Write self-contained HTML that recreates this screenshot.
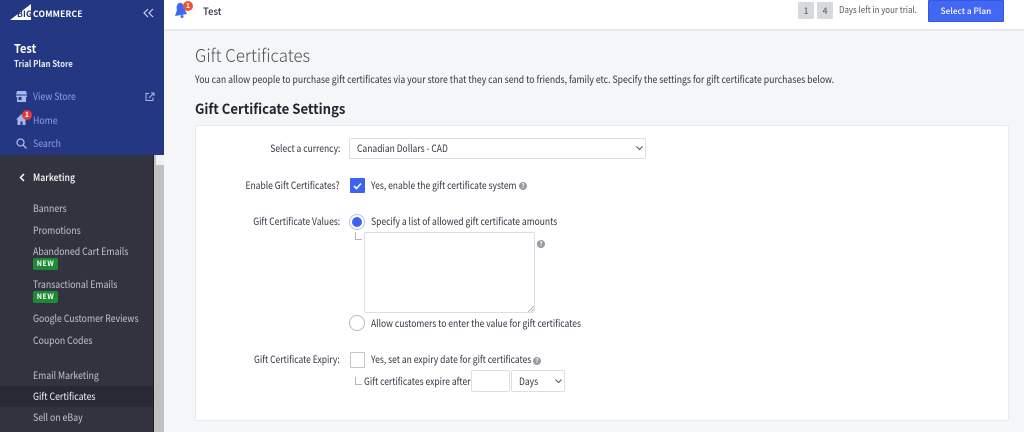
<!DOCTYPE html>
<html><head><meta charset="utf-8"><style>
*{box-sizing:border-box}
html,body{margin:0;padding:0;width:1024px;height:432px;overflow:hidden;background:#f5f6f8;font-family:"Noto Sans CJK JP","Liberation Sans",sans-serif;color:#313440}
.t{position:absolute;white-space:nowrap;line-height:14px;font-size:10px;transform:scaleX(.874);transform-origin:0 0}
.f{transform:scaleX(.851)}
.r{text-align:right;transform-origin:100% 0}
.b{position:absolute}
.n{color:#c3c4cb;left:33px}
.u{color:#8ea0e0;}
.new{position:absolute;left:33px;width:25px;height:12px;background:#1f8a36;border-radius:2px;color:#fff;font-size:7px;font-weight:700;line-height:12px;text-align:center;letter-spacing:.5px}
</style></head><body>
<div class="b" style="left:0;top:0;width:164px;height:155px;background:#243782"></div>
<div class="b" style="left:0;top:155px;width:154px;height:277px;background:#333340"></div>
<div class="b" style="left:154px;top:155px;width:10px;height:277px;background:#c0c0c0"></div>
<div class="b" style="left:156px;top:155px;width:8px;height:10px;background:#f1f1f1"></div>
<div class="b" style="left:153px;top:155px;width:1px;height:277px;background:#1e1e28"></div>
<div class="b" style="left:0;top:386px;width:153px;height:21px;background:#292935"></div>
<svg class="b" style="left:9px;top:3px" width="24" height="18"><path d="M1 17L22 1V17Z" fill="#fff"/></svg>
<div class="t" style="left:17px;top:7px;font-size:8.5px;font-weight:700;color:#243782;letter-spacing:.2px;transform:none">BIG</div>
<div class="t" style="left:33px;top:7px;font-size:8.5px;font-weight:700;color:#fff;letter-spacing:.2px;transform:none">COMMERCE</div>
<svg class="b" style="left:143px;top:8px" width="11" height="10" fill="none" stroke="#c9d2f0" stroke-width="1.2"><path d="M5 1L1 5L5 9M10 1L6 5L10 9"/></svg>
<div class="t" style="left:14px;top:42px;font-size:12px;font-weight:700;color:#fff;transform:scaleX(.92)">Test</div>
<div class="t" style="left:14px;top:57px;font-size:9px;font-weight:700;color:#e8ebf6;transform:scaleX(.87)">Trial Plan Store</div>
<svg class="b" style="left:16px;top:91px" width="11" height="11" fill="#a9b8ea"><path d="M1 0H10L11 3.5H0Z"/><path d="M0 4.5H11V6H10V11H1V6H0ZM2.5 6V9H5.5V6Z"/></svg>
<div class="t u" style="left:33px;top:89px">View Store</div>
<svg class="b" style="left:145px;top:92px" width="10" height="10" fill="none" stroke="#a9b8ea" stroke-width="1"><path d="M4 1.5H1V8.5H8V5.5M4 6L8.5 1.5M6 1H9V4"/></svg>
<svg class="b" style="left:16px;top:114px" width="11" height="11" fill="#a9b8ea"><path d="M5.5 0L11 5.5H9.5V11H6.5V7.5H4.5V11H1.5V5.5H0Z"/></svg>
<div class="b" style="left:22px;top:110px;width:10px;height:10px;border-radius:50%;background:#e23a3f;color:#fff;font-size:7px;line-height:10px;text-align:center;font-weight:700">1</div>
<div class="t u" style="left:33px;top:113px">Home</div>
<svg class="b" style="left:16px;top:138px" width="11" height="11" fill="none" stroke="#a9b8ea" stroke-width="1.3"><circle cx="4.5" cy="4.5" r="3.5"/><path d="M7 7L10.5 10.5"/></svg>
<div class="t u" style="left:33px;top:136px">Search</div>
<svg class="b" style="left:19px;top:173px" width="6" height="9" fill="none" stroke="#fff" stroke-width="1.5"><path d="M5 1L1.5 4.5L5 8"/></svg>
<div class="t" style="left:33px;top:170px;color:#fff;font-weight:500">Marketing</div>
<div class="t n" style="top:201px">Banners</div>
<div class="t n" style="top:223px">Promotions</div>
<div class="t n" style="top:244px">Abandoned Cart Emails</div>
<div class="new" style="top:258px">NEW</div>
<div class="t n" style="top:277px">Transactional Emails</div>
<div class="new" style="top:291px">NEW</div>
<div class="t n" style="top:311px">Google Customer Reviews</div>
<div class="t n" style="top:333px">Coupon Codes</div>
<div class="t n" style="top:368px">Email Marketing</div>
<div class="t n" style="top:389px;color:#f0f0f3">Gift Certificates</div>
<div class="t n" style="top:410px">Sell on eBay</div>

<div class="b" style="left:164px;top:0;width:860px;height:31px;background:#fff;border-bottom:2px solid #e8e9ed"></div>
<svg class="b" style="left:174px;top:2px" width="14" height="16" fill="#3d68f5"><path d="M5 1C8 0 10 3 10 6L13 12L1 14L3 8C2 5 3 2 5 1Z"/><circle cx="8" cy="14.500" r="1.500"/></svg>
<div class="b" style="left:183px;top:1px;width:10px;height:10px;border-radius:50%;background:#ed5233;color:#fff;font-size:7px;line-height:10px;text-align:center;font-weight:700">1</div>
<div class="t" style="left:203px;top:4px;font-size:10px;font-weight:500;transform:scaleX(.95)">Test</div>
<div class="b" style="left:798px;top:2px;width:16px;height:17px;background:#d8d9dd;border-radius:1px;font-size:9px;line-height:17px;text-align:center;color:#555">1</div>
<div class="b" style="left:817px;top:2px;width:16px;height:17px;background:#d8d9dd;border-radius:1px;font-size:9px;line-height:17px;text-align:center;color:#555">4</div>
<div class="t" style="left:839px;top:3px;font-size:9px;color:#55565f;transform:scaleX(.879)">Days left in your trial.</div>
<div class="b" style="left:928px;top:0;width:76px;height:22px;background:#4267f5;border:1px solid #3558e0;border-radius:1px;color:#fff;font-size:8.3px;line-height:20px;text-align:center;font-weight:500">Select a Plan</div>

<div class="t" style="left:195px;top:44px;font-size:18px;line-height:22px;font-weight:300;color:#4d5059;transform:scaleX(.935)">Gift Certificates</div>
<div class="t" style="left:195px;top:72px;transform:scaleX(.868)">You can allow people to purchase gift certificates via your store that they can send to friends, family etc. Specify the settings for gift certificate purchases below.</div>
<div class="t" style="left:195px;top:100px;font-size:14px;line-height:18px;font-weight:700;color:#23252e;transform:scaleX(.9375)">Gift Certificate Settings</div>
<div class="b" style="left:195px;top:125px;width:814px;height:296px;background:#fff;border:1px solid #e9eaee;border-radius:2px"></div>

<div class="t r f" style="right:684px;top:141px">Select a currency:</div>
<div class="b" style="left:349px;top:138px;width:297px;height:21px;border:1px solid #dcdee3;border-radius:2px"></div>
<div class="t f" style="left:357px;top:141px">Canadian Dollars - CAD</div>
<svg class="b" style="left:636px;top:146px" width="7" height="5" fill="none" stroke="#555" stroke-width="1"><path d="M.5 .5L3.500 3.500L6.500 .5"/></svg>

<div class="t r f" style="right:684px;top:178px">Enable Gift Certificates?</div>
<div class="b" style="left:350px;top:178px;width:15px;height:15px;background:#3c64f4;border-radius:1px"></div>
<svg class="b" style="left:353px;top:182px" width="9" height="8" fill="none" stroke="#fff" stroke-width="1.6"><path d="M1 4L3.500 6.500L8 1.500"/></svg>
<div class="t f" style="left:371px;top:178px">Yes, enable the gift certificate system</div>
<div class="b" style="left:519px;top:182px;width:8px;height:8px;border-radius:50%;background:#999ba3;color:#fff;font-size:6px;line-height:8px;text-align:center;font-weight:700">?</div>

<div class="t r f" style="right:684px;top:214px">Gift Certificate Values:</div>
<div class="b" style="left:349px;top:214px;width:16px;height:16px;border:1px solid #b5bfe8;border-radius:50%"></div>
<div class="b" style="left:352px;top:217px;width:10px;height:10px;background:#3c64f4;border-radius:50%"></div>
<div class="t f" style="left:371px;top:214px">Specify a list of allowed gift certificate amounts</div>
<div class="b" style="left:355px;top:232px;width:7px;height:8px;border-left:1px solid #b5b6bc;border-bottom:1px solid #b5b6bc"></div>
<div class="b" style="left:364px;top:232px;width:171px;height:81px;border:1px solid #dcdee3;border-radius:2px"></div>
<svg class="b" style="left:528px;top:306px" width="6" height="6" stroke="#999" stroke-width=".7"><path d="M0 6L6 0M3 6L6 3"/></svg>
<div class="b" style="left:537px;top:240px;width:8px;height:8px;border-radius:50%;background:#999ba3;color:#fff;font-size:6px;line-height:8px;text-align:center;font-weight:700">?</div>
<div class="b" style="left:349px;top:315px;width:16px;height:16px;border:1px solid #b9bac6;border-radius:50%"></div>
<div class="t f" style="left:371px;top:316px">Allow customers to enter the value for gift certificates</div>

<div class="t r f" style="right:684px;top:352px">Gift Certificate Expiry:</div>
<div class="b" style="left:350px;top:352px;width:15px;height:16px;border:1px solid #c4c5cf;border-radius:1px"></div>
<div class="t f" style="left:371px;top:352px">Yes, set an expiry date for gift certificates</div>
<div class="b" style="left:533px;top:357px;width:8px;height:8px;border-radius:50%;background:#999ba3;color:#fff;font-size:6px;line-height:8px;text-align:center;font-weight:700">?</div>
<div class="b" style="left:355px;top:377px;width:7px;height:8px;border-left:1px solid #b5b6bc;border-bottom:1px solid #b5b6bc"></div>
<div class="t f" style="left:364px;top:374px">Gift certificates expire after</div>
<div class="b" style="left:471px;top:370px;width:39px;height:22px;border:1px solid #dcdee3;border-radius:2px"></div>
<div class="b" style="left:511px;top:370px;width:54px;height:22px;border:1px solid #dcdee3;border-radius:2px"></div>
<div class="t f" style="left:519px;top:374px">Days</div>
<svg class="b" style="left:555px;top:379px" width="7" height="5" fill="none" stroke="#555" stroke-width="1"><path d="M.5 .5L3.500 3.500L6.500 .5"/></svg>
</body></html>
